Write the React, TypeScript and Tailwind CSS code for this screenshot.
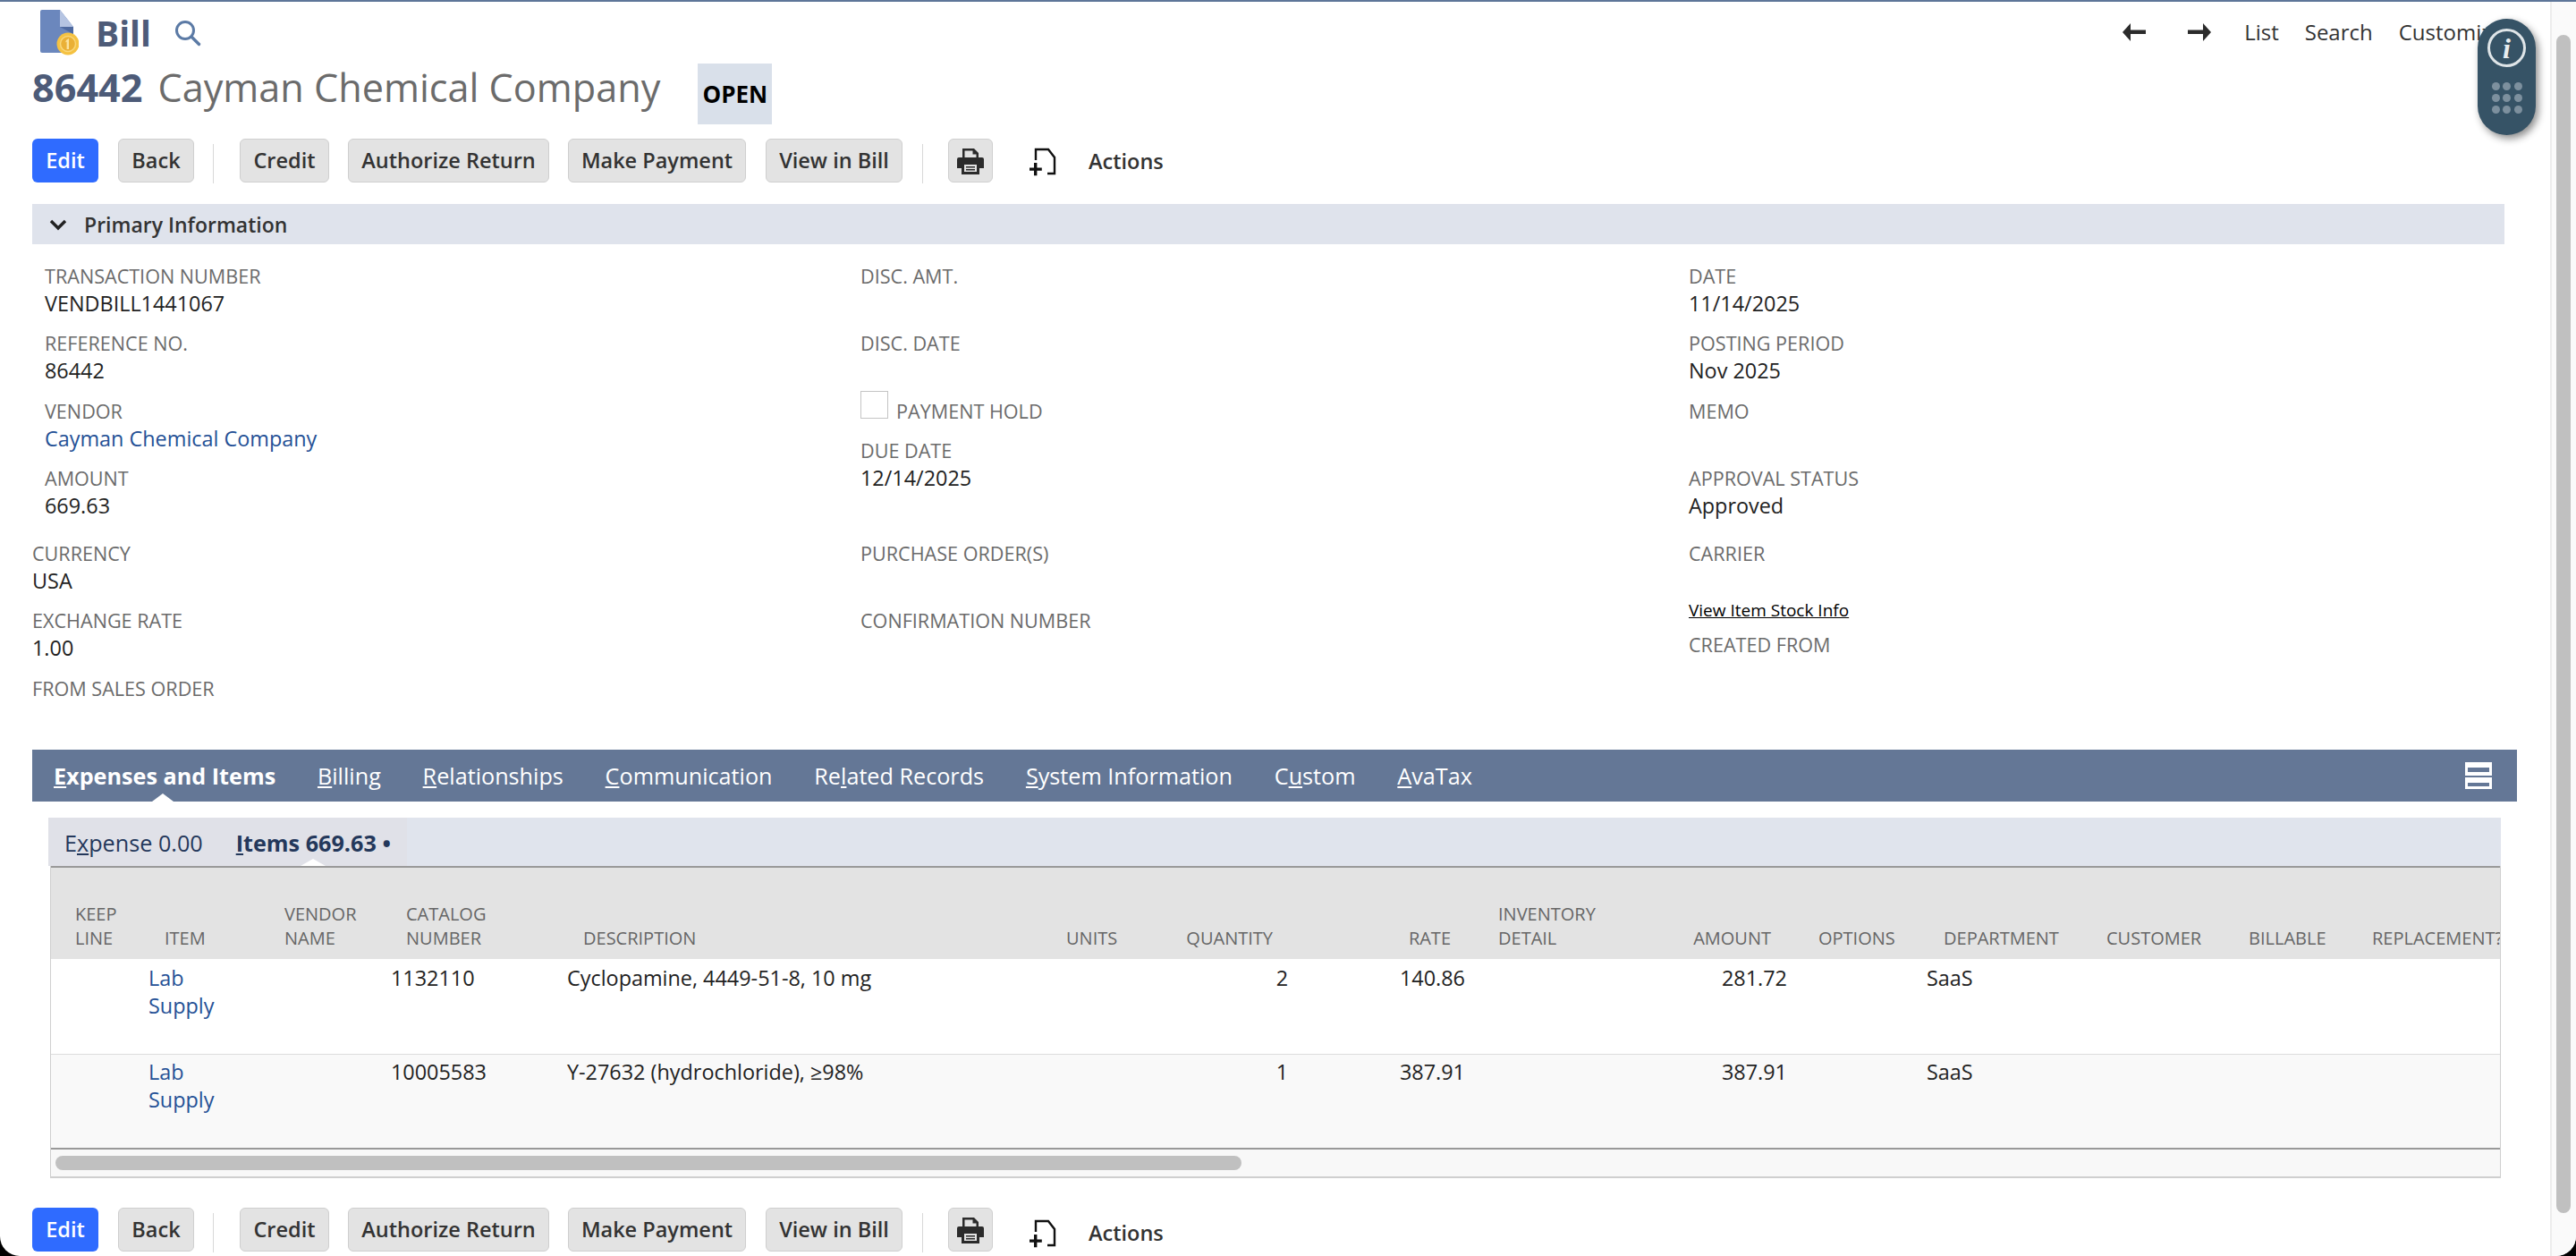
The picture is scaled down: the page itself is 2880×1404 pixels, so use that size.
import { ReactNode } from "react";

const font = { fontFamily: '"Open Sans", "Noto Sans", sans-serif' };

function Btn({ children, className = "" }: { children: ReactNode; className?: string }) {
  return (
    <button className={`h-[49px] rounded-[6px] border border-[#cfcfcf] bg-[#e3e3e3] text-[23.5px] font-semibold text-[#333] flex items-center justify-center ${className}`}>
      {children}
    </button>
  );
}

function PrintIcon() {
  return (
    <svg width="30" height="30" viewBox="0 0 30 30">
      <path d="M6 12V1h13l5 5v6h-2.5V7.5H17.5V3.5H8.5V12z" fill="#2b2b2b" />
      <path d="M2 11h26a2 2 0 0 1 2 2v10h-5v-6H5v6H0V13a2 2 0 0 1 2-2z" fill="#2b2b2b" />
      <path d="M5 16h20v14H5z" fill="#2b2b2b" />
      <path d="M8 19h14v8H8z" fill="#e3e3e3" />
      <path d="M10 21h10v1.5H10zM10 24h10v1.5H10z" fill="#2b2b2b" />
    </svg>
  );
}

function ActionsIcon() {
  return (
    <svg width="34" height="32" viewBox="0 0 34 32">
      <path d="M7 14V2h14l7 9v18h-8" fill="none" stroke="#111" strokeWidth="2.4" />
      <path d="M5 17h3.4v5.4h5.4v3.4H8.4v5.4H5v-5.4H0v-3.4h5z" fill="#111" />
    </svg>
  );
}

function ButtonRow({ actionsClass }: { actionsClass: string }) {
  return (
    <div className="flex items-start h-[49px]">
      <button className="h-[49px] w-[74px] rounded-[6px] bg-[#2f6bff] text-[23.5px] font-semibold text-white">Edit</button>
      <Btn className="ml-[22px] w-[85px]">Back</Btn>
      <div className="ml-[21px] mt-[6px] h-[44px] w-px bg-[#d8d8d8]" />
      <Btn className="ml-[29px] w-[100px]">Credit</Btn>
      <Btn className="ml-[21px] w-[225px]">Authorize Return</Btn>
      <Btn className="ml-[21px] w-[199px]">Make Payment</Btn>
      <Btn className="ml-[22px] w-[153px]">View in Bill</Btn>
      <div className="ml-[22px] mt-[6px] h-[44px] w-px bg-[#d8d8d8]" />
      <Btn className="ml-[28px] w-[50px]"><PrintIcon /></Btn>
      <div className={`ml-[41px] flex items-center ${actionsClass}`}>
        <ActionsIcon />
        <span className="ml-[32px] text-[23.5px] font-semibold text-[#333]">Actions</span>
      </div>
    </div>
  );
}

function Field({ label, value, link, className = "" }: { label: string; value?: string; link?: boolean; className?: string }) {
  return (
    <div className={`h-[75.3px] ${className}`}>
      <div className="h-[30px] text-[21.6px] leading-[30px] text-[#6b6b6b]">{label}</div>
      {value && <div className={`h-[31px] text-[23.4px] leading-[31px] ${link ? "text-[#255196]" : "text-[#222]"}`}>{value}</div>}
    </div>
  );
}

const columns = [
  { w: "w-[98px]", head: ["KEEP", "LINE"], pad: "pl-[27px]" },
  { w: "w-[134px]", head: ["ITEM"], pad: "pl-[29px]" },
  { w: "w-[136px]", head: ["VENDOR", "NAME"], pad: "pl-[29px]" },
  { w: "w-[198px]", head: ["CATALOG", "NUMBER"], pad: "pl-[29px]" },
  { w: "w-[540px]", head: ["DESCRIPTION"], pad: "pl-[29px]" },
  { w: "w-[107px]", head: ["UNITS"], pad: "pl-[29px]" },
  { w: "w-[182px]", head: ["QUANTITY"], pad: "pr-[29px] text-right" },
  { w: "w-[198px]", head: ["RATE"], pad: "pr-[28px] text-right" },
  { w: "w-[200px]", head: ["INVENTORY", "DETAIL"], pad: "pl-[25px]" },
  { w: "w-[159px]", head: ["AMOUNT"], pad: "pr-[29px] text-right" },
  { w: "w-[135px]", head: ["OPTIONS"], pad: "pl-[24px]" },
  { w: "w-[182px]", head: ["DEPARTMENT"], pad: "pl-[29px]" },
  { w: "w-[159px]", head: ["CUSTOMER"], pad: "pl-[29px]" },
  { w: "w-[138px]", head: ["BILLABLE"], pad: "pl-[29px]" },
  { w: "w-[200px]", head: ["REPLACEMENT?"], pad: "pl-[29px]" },
];

const rows = [
  { catalog: "1132110", desc: "Cyclopamine, 4449-51-8, 10 mg", qty: "2", rate: "140.86", amount: "281.72" },
  { catalog: "10005583", desc: "Y-27632 (hydrochloride), ≥98%", qty: "1", rate: "387.91", amount: "387.91" },
];

export default function App() {
  return (
    <div className="w-[2880px] h-[1404px] bg-black overflow-hidden" style={font}>
      <div className="relative flex h-full overflow-hidden rounded-b-[22px] border-t-2 border-[#5e7699] bg-white">
        <main className="w-[2851px] pl-[36px]">
          {/* Header */}
          <div className="flex h-[68px] items-center justify-between pr-[52px]">
            <div className="flex items-center">
              <svg width="44" height="52" viewBox="0 0 44 52" className="ml-[8px] mt-[-1px]">
                <path d="M3 1h20l15 19v29H3a2 2 0 0 1-2-2V3a2 2 0 0 1 2-2z" fill="#6b87bd" />
                <path d="M23 1l15 19H23z" fill="#b5c4e2" />
                <path d="M23 20h15v8z" fill="#4f6aa0" />
                <circle cx="32" cy="39" r="12.5" fill="#f5c242" />
                <circle cx="32" cy="39" r="8.5" fill="#eab036" stroke="#f9d77a" strokeWidth="1.5" />
                <path d="M30 35l3-2v12h-2.4v-8.500l-1.500 1z" fill="#fbe3a0" />
              </svg>
              <span className="ml-[19px] text-[39px] font-bold leading-none text-[#4d5b78]">Bill</span>
              <svg width="30" height="30" viewBox="0 0 30 30" className="ml-[26px] mt-[2px]">
                <circle cx="12" cy="12" r="9.500" fill="none" stroke="#5b7aa5" strokeWidth="3" />
                <path d="M19 19l8.500 8.500" stroke="#5b7aa5" strokeWidth="3.400" strokeLinecap="round" />
              </svg>
            </div>
            <div className="flex items-center text-[24px] font-medium text-[#333]">
              <svg width="26" height="20" viewBox="0 0 26 20">
                <path d="M0 10l9-10v7.500h17v4.500H9v8z" fill="#2b2b2b" />
              </svg>
              <svg width="26" height="20" viewBox="0 0 26 20" className="ml-[47px]">
                <path d="M26 10L17 0v7.500H0v4.500h17v8z" fill="#2b2b2b" />
              </svg>
              <span className="ml-[37px]">List</span>
              <span className="ml-[29px]">Search</span>
              <span className="ml-[29px]">Customize</span>
            </div>
          </div>

          {/* Title */}
          <div className="flex h-[69px] items-start">
            <h1 className="text-[43.2px] leading-[56px] text-[#6b6b6b]">
              <span className="font-bold text-[#4d5b78]">86442</span>
              <span className="ml-[17px]">Cayman Chemical Company</span>
            </h1>
            <div className="ml-[42px] mt-[1px] flex h-[68px] w-[83px] items-center justify-center bg-[#d9e0ea] text-[26px] font-bold text-black">OPEN</div>
          </div>

          <div className="mt-[16px]">
            <ButtonRow actionsClass="h-[51px]" />
          </div>

          {/* Primary Information */}
          <div className="mt-[24px] flex h-[45px] w-[2764px] items-center bg-[#dfe3ec] pl-[19px]">
            <svg width="20" height="14" viewBox="0 0 20 14">
              <path d="M2 3l8 8 8-8" fill="none" stroke="#222" strokeWidth="3.400" />
            </svg>
            <span className="ml-[19px] pt-[1px] text-[23px] font-semibold text-[#333]">Primary Information</span>
          </div>

          <section className="mt-[21px] grid h-[544px] grid-cols-[926px_926px_1fr]">
            <div>
              <div className="pl-[14px]">
                <Field label="TRANSACTION NUMBER" value="VENDBILL1441067" />
                <Field label="REFERENCE NO." value="86442" />
                <Field label="VENDOR" value="Cayman Chemical Company" link />
                <Field label="AMOUNT" value="669.63" />
              </div>
              <div className="mt-[9px]">
                <Field label="CURRENCY" value="USA" />
                <Field label="EXCHANGE RATE" value="1.00" />
                <Field label="FROM SALES ORDER" />
              </div>
            </div>
            <div>
              <Field label="DISC. AMT." />
              <Field label="DISC. DATE" />
              <div className="flex h-[44px] items-start">
                <div className="mt-[-8px] h-[31px] w-[31px] border border-[#c4c4c4]" />
                <span className="ml-[9px] text-[21.6px] leading-[30px] text-[#6b6b6b]">PAYMENT HOLD</span>
              </div>
              <Field label="DUE DATE" value="12/14/2025" />
              <div className="mt-[40px]">
                <Field label="PURCHASE ORDER(S)" />
                <Field label="CONFIRMATION NUMBER" />
              </div>
            </div>
            <div>
              <Field label="DATE" value="11/14/2025" />
              <Field label="POSTING PERIOD" value="Nov 2025" />
              <Field label="MEMO" />
              <Field label="APPROVAL STATUS" value="Approved" />
              <div className="mt-[9px]">
                <Field label="CARRIER" className="!h-[65px]" />
                <div className="h-[27px] text-[19px] leading-[27px] text-black underline">View Item Stock Info</div>
                <div className="mt-[10px] h-[30px] text-[21.6px] leading-[30px] text-[#6b6b6b]">CREATED FROM</div>
              </div>
            </div>
          </section>

          {/* Tabs */}
          <div className="relative flex h-[58px] w-[2778px] items-center justify-between bg-[#647796] pl-[24px] pr-[28px] text-[25.2px] text-white">
            <div className="flex gap-[46.800px] pt-[2px]">
              <span className="font-bold"><u>E</u>xpenses and Items</span>
              <span><u>B</u>illing</span>
              <span><u>R</u>elationships</span>
              <span><u>C</u>ommunication</span>
              <span>Re<u>l</u>ated Records</span>
              <span><u>S</u>ystem Information</span>
              <span>C<u>u</u>stom</span>
              <span><u>A</u>vaTax</span>
            </div>
            <div className="flex w-[30px] flex-col gap-[2px]">
              <div className="h-[15px] border-x-[3px] border-t-[6px] border-b-[4px] border-white bg-[#647796]" />
              <div className="h-[13px] border-x-[3px] border-t-[6px] border-b-[3px] border-white bg-[#647796]" />
            </div>
            <div className="absolute bottom-0 left-[134px] h-0 w-0 border-x-[12px] border-b-[9px] border-x-transparent border-b-white" />
          </div>

          {/* Subtabs and table */}
          <div className="ml-[18px] mt-[18px] w-[2742px]">
            <div className="relative h-[54px] bg-[#e0e4ed]">
              <div className="flex h-full w-[401px] items-center gap-[37px] bg-[#e0e1e8] pl-[18px] pt-[4px] text-[25.2px] text-[#24385b]">
                <span>E<u>x</u>pense 0.00</span>
                <span className="font-bold"><u>I</u>tems 669.63 •</span>
              </div>
              <div className="absolute bottom-0 left-[282px] h-0 w-0 border-x-[14px] border-b-[8px] border-x-transparent border-b-white" />
            </div>
            <div className="ml-[2px] border-x border-b-2 border-x-[#cfcfcf] border-b-[#cfcfcf] bg-[#f8f8f8]">
              <div className="overflow-hidden border-y-2 border-y-[#999]">
                <table className="w-[2766px] table-fixed border-collapse">
                  <colgroup>
                    {columns.map((c) => (
                      <col key={c.head[0]} className={c.w} />
                    ))}
                  </colgroup>
                  <thead>
                    <tr className="h-[102px] bg-[#e3e3e3]">
                      {columns.map((c) => (
                        <th key={c.head[0]} className={`align-bottom pb-[10px] text-[20px] font-normal leading-[27px] text-[#666] text-left whitespace-nowrap ${c.pad}`}>
                          {c.head.map((h) => (
                            <div key={h}>{h}</div>
                          ))}
                        </th>
                      ))}
                    </tr>
                  </thead>
                  <tbody className="text-[23.4px] leading-[31px] text-[#222]">
                    {rows.map((r, i) => {
                      const pt = i === 0 ? "pt-[6px]" : "pt-[4px]";
                      return (
                        <tr key={r.catalog} className={i === 0 ? "h-[106px] border-b border-[#dcdcdc] bg-white" : "h-[105px] bg-[#f9f9f9]"}>
                          <td />
                          <td className={`align-top pl-[11px] text-[#255196] ${pt}`}>Lab<br />Supply</td>
                          <td />
                          <td className={`align-top pl-[12px] ${pt}`}>{r.catalog}</td>
                          <td className={`align-top pl-[11px] ${pt}`}>{r.desc}</td>
                          <td />
                          <td className={`align-top pr-[12px] text-right ${pt}`}>{r.qty}</td>
                          <td className={`align-top pr-[12px] text-right ${pt}`}>{r.rate}</td>
                          <td />
                          <td className={`align-top pr-[11px] text-right ${pt}`}>{r.amount}</td>
                          <td />
                          <td className={`align-top pl-[10px] ${pt}`}>SaaS</td>
                          <td />
                          <td />
                          <td />
                        </tr>
                      );
                    })}
                  </tbody>
                </table>
              </div>
              <div className="flex h-[30px] items-center pl-[5px]">
                <div className="h-[16px] w-[1326px] rounded-full bg-[#c0c0c0]" />
              </div>
            </div>
          </div>

          <div className="mt-[33px]">
            <ButtonRow actionsClass="h-[49px] mt-[4px]" />
          </div>
        </main>

        {/* Page scrollbar */}
        <aside className="w-[29px] border-l-2 border-[#ececec] bg-[#fafafa] pl-[5px] pt-[37px]">
          <div className="h-[1317px] w-[16px] rounded-full bg-[#c0c0c0]" />
        </aside>

        {/* Floating widget */}
        <div className="absolute left-[2770px] top-[19px] flex h-[130px] w-[65px] flex-col items-center rounded-full bg-[#365366] pt-[11px] shadow-[3px_4px_8px_rgba(0,0,0,0.45)]">
          <div className="flex h-[43px] w-[43px] items-center justify-center rounded-full border-[3px] border-[#dfe5e8] text-[32px] font-bold italic leading-none text-[#e8edf0]" style={{ fontFamily: '"Liberation Serif", serif' }}>i</div>
          <div className="mt-[17px] grid grid-cols-3 gap-x-[3.5px] gap-y-[4px]">
            {[1, 2, 3, 4, 5, 6, 7, 8, 9].map((n) => (
              <div key={n} className="h-[9px] w-[9px] rounded-full bg-[#7d909e]" />
            ))}
          </div>
        </div>
      </div>
    </div>
  );
}
